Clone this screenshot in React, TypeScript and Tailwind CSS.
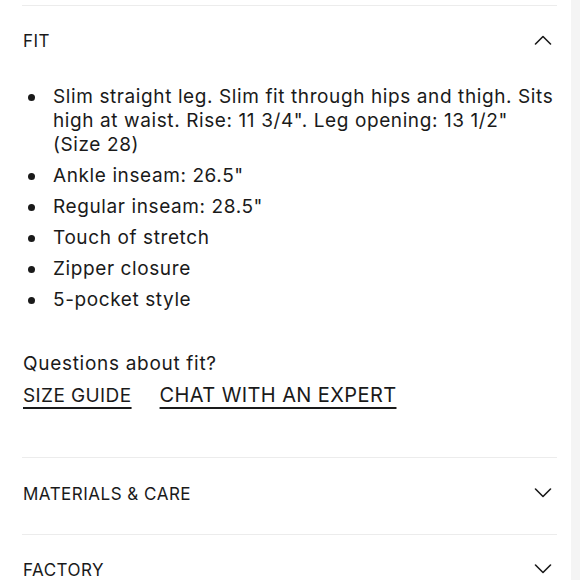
import React from "react";

const Chevron = ({ up }: { up?: boolean }) => (
  <svg width="18" height="10" viewBox="0 0 18 10" fill="none" className="mt-[6px] mr-[5px]">
    <path
      d={up ? "M1.5 9 L9 1.5 L16.5 9" : "M1.5 1 L9 8.5 L16.5 1"}
      stroke="#1a1a1a"
      strokeWidth="1.6"
      strokeLinecap="round"
      strokeLinejoin="round"
    />
  </svg>
);

const items = [
  'Slim straight leg. Slim fit through hips and thigh. Sits high at waist. Rise: 11 3/4". Leg opening: 13 1/2" (Size 28)',
  'Ankle inseam: 26.5"',
  'Regular inseam: 28.5"',
  "Touch of stretch",
  "Zipper closure",
  "5-pocket style",
];

export default function App() {
  return (
    <div
      className="w-[580px] h-[580px] overflow-hidden flex bg-white text-[#1a1a1a]"
      style={{ fontFamily: "Inter, 'Noto Sans', sans-serif" }}
    >
      <div className="flex-1 pl-[22px] pr-[14px]">
        <div className="mt-[5px] border-t border-[#ececec]">
          <div className="flex justify-between items-start pt-[23px] pb-[28px]">
            <span className="text-[17px] leading-[24px] pl-[1px] tracking-[0.5px]">FIT</span>
            <Chevron up />
          </div>
          <ul className="mt-[4px] flex flex-col gap-[7px]">
            {items.map((t) => (
              <li key={t} className="flex">
                <span className="w-[31px] shrink-0">
                  <span className="block w-[7px] h-[7px] rounded-full bg-[#1a1a1a] ml-[6px] mt-[9px]" />
                </span>
                <span className="text-[19px] leading-[24px] tracking-[0.6px]">{t}</span>
              </li>
            ))}
          </ul>
          <div className="mt-[40px] pl-[1px] text-[19px] leading-[24px] tracking-[0.7px]">Questions about fit?</div>
          <div className="mt-[7px] pl-[1px] flex items-baseline gap-[28px] leading-[24px] pb-[49px]">
            <span className="text-[19px] tracking-[0.4px] underline decoration-[1.5px] underline-offset-[5px]">SIZE GUIDE</span>
            <span className="text-[20px] tracking-[0.4px] underline decoration-[1.5px] underline-offset-[5px]">CHAT WITH AN EXPERT</span>
          </div>
        </div>
        <div className="border-t border-[#ececec]">
          <div className="flex justify-between items-start pt-[24px] pb-[28px]">
            <span className="text-[17px] leading-[24px] pl-[1px] tracking-[0.5px]">MATERIALS &amp; CARE</span>
            <Chevron />
          </div>
        </div>
        <div className="border-t border-[#ececec]">
          <div className="flex justify-between items-start pt-[23px] pb-[28px]">
            <span className="text-[17px] leading-[24px] pl-[1px] tracking-[0.5px]">FACTORY</span>
            <Chevron />
          </div>
        </div>
      </div>
      <div className="w-[9px] bg-[#f4f4f4]" />
    </div>
  );
}
